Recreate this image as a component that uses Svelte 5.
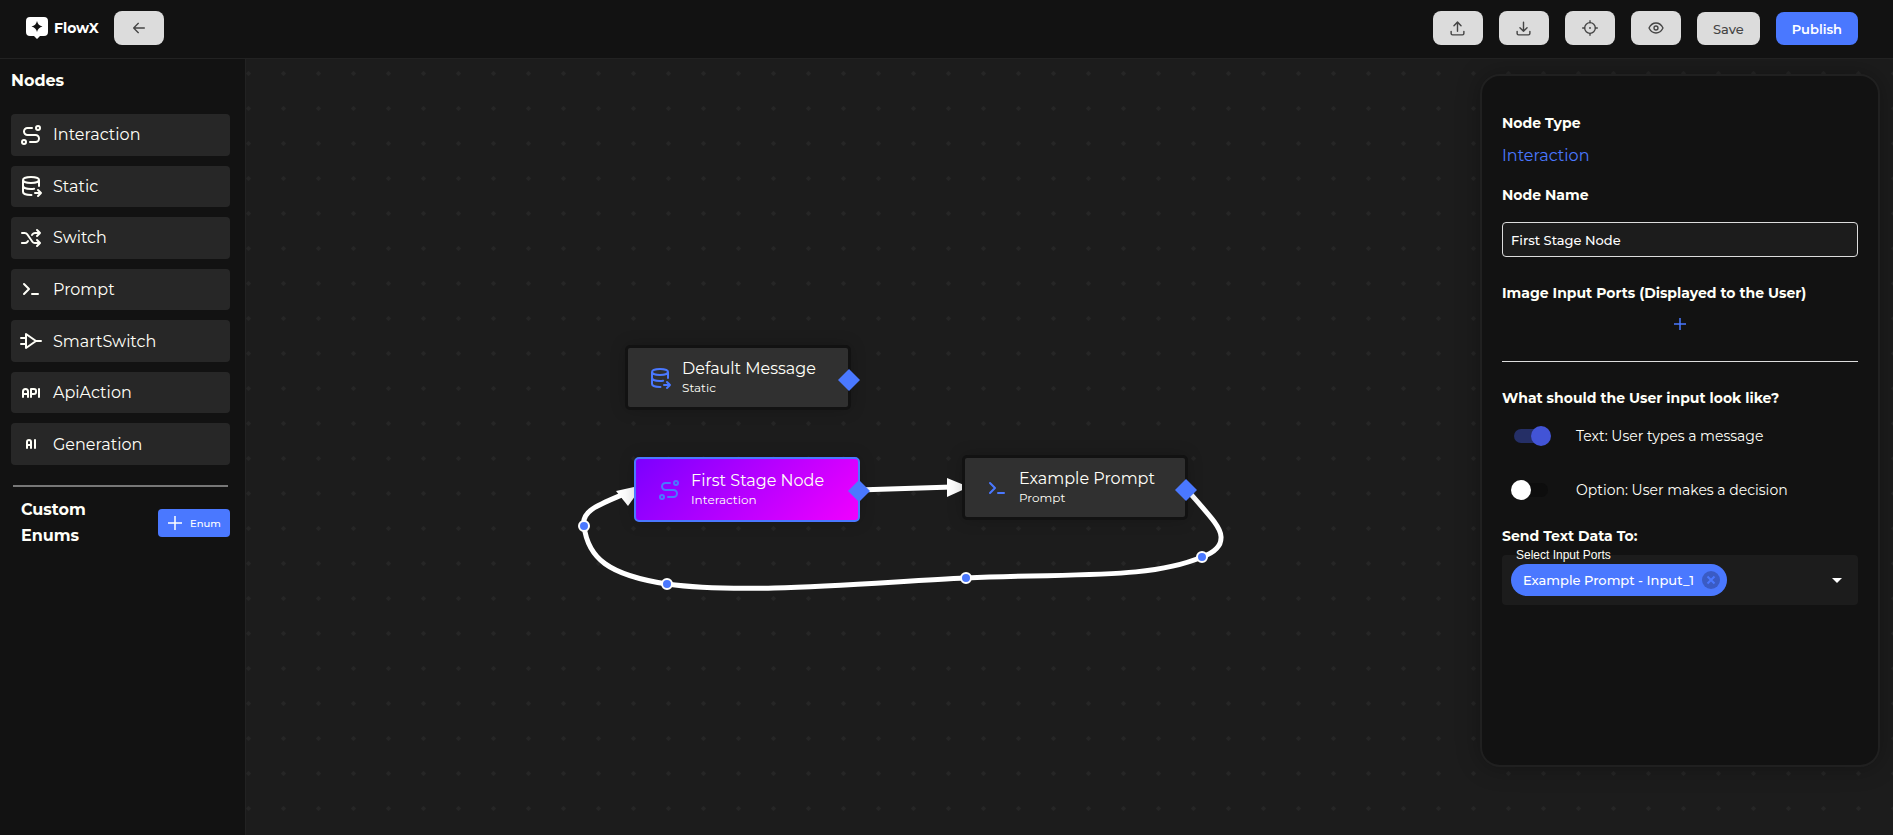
<script>
  const paths = {
    route: 'M3 19a2 2 0 1 0 4 0a2 2 0 0 0 -4 0M19 7a2 2 0 1 0 0 -4a2 2 0 0 0 0 4zM11 19h5.5a3.5 3.5 0 0 0 0 -7h-8a3.5 3.5 0 0 1 0 -7h4.5',
    database: 'M4 6c0 1.657 3.582 3 8 3s8 -1.343 8 -3s-3.582 -3 -8 -3s-8 1.343 -8 3M4 6v6c0 1.657 3.582 3 8 3c1.118 0 2.183 -.086 3.15 -.241M20 12v-6M4 12v6c0 1.657 3.582 3 8 3c.157 0 .312 -.002 .466 -.005M16 19h6M19 16l3 3l-3 3',
    shuffle: 'M18 4l3 3l-3 3M18 20l3 -3l-3 -3M3 7h2.700a3 3 0 0 1 2.500 1.300l5.200 7.400a3 3 0 0 0 2.500 1.300h5M21 7h-5a3 3 0 0 0 -2.500 1.300l-.5 .7M9 15l-.6 .800a3 3 0 0 1 -2.500 1.200h-3',
    prompt: 'M5 7l5 5l-5 5M13 17h6',
    buffer: 'M22 12h-5M2 9h5M2 15h5M7 5l10 7l-10 7z',
    api: 'M4 13h5M12 16v-8h3a2 2 0 0 1 2 2v1a2 2 0 0 1 -2 2h-3M20 8v8M9 16v-5.5a2.5 2.5 0 0 0 -5 0v5.5',
    ai: 'M8 16v-6a2 2 0 1 1 4 0v6M8 13h4M16 8v8',
    upload: 'M3 16v3a2 2 0 0 0 2 2h14a2 2 0 0 0 2 -2v-3M7 8l5 -5l5 5M12 3v13',
    download: 'M3 16v3a2 2 0 0 0 2 2h14a2 2 0 0 0 2 -2v-3M7 11l5 5l5 -5M12 3v13',
    back: 'M4 12h16M11 5l-7 7l7 7'
  };

  const palette = [
    { name: 'Interaction', icon: 'route' },
    { name: 'Static', icon: 'database' },
    { name: 'Switch', icon: 'shuffle' },
    { name: 'Prompt', icon: 'prompt' },
    { name: 'SmartSwitch', icon: 'buffer' },
    { name: 'ApiAction', icon: 'api' },
    { name: 'Generation', icon: 'ai' }
  ];

  const nodes = [
    { title: 'Default Message', type: 'Static', icon: 'database', x: 379, y: 286, active: false },
    { title: 'First Stage Node', type: 'Interaction', icon: 'route', x: 388, y: 398, active: true },
    { title: 'Example Prompt', type: 'Prompt', icon: 'prompt', x: 716, y: 396, active: false }
  ];

  const handles = [
    [338, 467],
    [421, 525],
    [720, 519],
    [956, 498]
  ];

  let nodeName = $state('First Stage Node');
  let textInput = $state(true);
  let optionInput = $state(false);
</script>

{#snippet icon(name, size)}
  <svg class="icon" width={size} height={size} viewBox="0 0 24 24" aria-hidden="true"><path d={paths[name]} /></svg>
{/snippet}

<div class="app">
  <header>
    <div class="brand">
      <svg width="24" height="24" viewBox="0 0 24 24" aria-hidden="true">
        <path fill="#fff" d="M5 1h14a4 4 0 0 1 4 4v11a4 4 0 0 1-4 4h-4l-3 3-3-3H5a4 4 0 0 1-4-4V5a4 4 0 0 1 4-4z" />
        <path fill="#121212" d="M12 5q1 4.500 5.500 5.500q-4.500 1-5.500 5.500q-1-4.500-5.500-5.500q4.500-1 5.500-5.500z" />
      </svg>
      <span>FlowX</span>
    </div>
    <button class="btn" aria-label="Back">{@render icon('back', 16)}</button>
    <div class="actions">
      <button class="btn" aria-label="Upload">{@render icon('upload', 17)}</button>
      <button class="btn" aria-label="Download">{@render icon('download', 17)}</button>
      <button class="btn" aria-label="Center view">
        <svg class="icon" width="16" height="16" viewBox="0 0 24 24" aria-hidden="true">
          <circle cx="12" cy="12" r="8" /><path d="M12 1v3M12 20v3M1 12h3M20 12h3" /><circle cx="12" cy="12" r=".5" />
        </svg>
      </button>
      <button class="btn" aria-label="Preview">
        <svg class="icon" width="16" height="16" viewBox="0 0 24 24" aria-hidden="true">
          <path d="M1.500 12C4 7 7.500 4.500 12 4.500S20 7 22.500 12C20 17 16.500 19.500 12 19.500S4 17 1.500 12z" /><circle cx="12" cy="12" r="3" />
        </svg>
      </button>
      <button class="btn text">Save</button>
      <button class="btn text primary">Publish</button>
    </div>
  </header>

  <div class="body">
    <aside>
      <h2>Nodes</h2>
      <ul>
        {#each palette as item}
          <li>{@render icon(item.icon, 24)}<span>{item.name}</span></li>
        {/each}
      </ul>
      <hr />
      <div class="enums">
        <h2>Custom Enums</h2>
        <button>
          <svg class="icon" width="16" height="16" viewBox="0 0 16 16" aria-hidden="true"><path d="M8 1v14M1 8h14" /></svg>
          Enum
        </button>
      </div>
    </aside>

    <main>
      <svg class="edges" aria-hidden="true">
        <path class="edge" d="M612 431L706 428" />
        <path class="head" d="M701 419L723 428L701 438z" />
        <path
          class="edge"
          d="M942 432C966 459 976 470 975 479C975 488 967 494 956 498C904 520 834 514 720 519C630 523 500 536 421 525C362 516 342 499 338 467C335 452 352 446 378 435"
        />
        <path class="head" d="M370 432L397 426L382 447z" />
        {#each handles as [x, y]}
          <circle cx={x} cy={y} r="5" />
        {/each}
      </svg>

      {#each nodes as node}
        <div class="node" class:active={node.active} style="left: {node.x}px; top: {node.y}px">
          {@render icon(node.icon, 24)}
          <div>
            <div class="title">{node.title}</div>
            <div class="type">{node.type}</div>
          </div>
          <svg class="port" width="22" height="22" viewBox="0 0 22 22" aria-hidden="true"><path d="M11 0L22 11L11 22L0 11z" /></svg>
        </div>
      {/each}

      <section class="panel">
        <h3>Node Type</h3>
        <p class="kind">Interaction</p>
        <label class="heading" for="node-name">Node Name</label>
        <input id="node-name" class="field" type="text" bind:value={nodeName} />
        <h3>Image Input Ports (Displayed to the User)</h3>
        <button class="add" aria-label="Add image input port">
          <svg class="icon" width="14" height="14" viewBox="0 0 14 14" aria-hidden="true"><path d="M7 1v12M1 7h12" /></svg>
        </button>
        <hr />
        <h3>What should the User input look like?</h3>
        <label class="toggle">
          <input type="checkbox" role="switch" bind:checked={textInput} />
          <span>Text: User types a message</span>
        </label>
        <label class="toggle">
          <input type="checkbox" role="switch" bind:checked={optionInput} />
          <span>Option: User makes a decision</span>
        </label>
        <h3 class="send">Send Text Data To:</h3>
        <div class="ports">
          <span class="legend" id="ports-label">Select Input Ports</span>
          <span class="chip">
            Example Prompt - Input_1
            <button aria-label="Remove Example Prompt - Input_1">
              <svg width="18" height="18" viewBox="0 0 18 18" aria-hidden="true">
                <circle cx="9" cy="9" r="9" /><path d="M5.500 5.500l7 7M12.500 5.500l-7 7" />
              </svg>
            </button>
          </span>
          <button class="open" aria-labelledby="ports-label">
            <svg width="24" height="24" viewBox="0 0 24 24" aria-hidden="true"><path d="M7 10l5 5 5-5z" /></svg>
          </button>
        </div>
      </section>
    </main>
  </div>
</div>

<style>
  :global(body) {
    margin: 0;
    background: #1c1c1c;
  }
  .app {
    display: flex;
    flex-direction: column;
    min-height: 100vh;
    color: #fffff8;
    font-family: Montserrat, Inter, sans-serif;
    font-size: 16px;
  }
  .app * {
    box-sizing: border-box;
  }
  button {
    border: 0;
    padding: 0;
    font-family: inherit;
    cursor: pointer;
  }
  h2,
  h3,
  p,
  ul {
    margin: 0;
    padding: 0;
  }
  .icon {
    flex: none;
    fill: none;
    stroke: currentColor;
    stroke-width: 2;
    stroke-linecap: round;
    stroke-linejoin: round;
  }
  header {
    display: flex;
    align-items: flex-start;
    height: 59px;
    padding: 11px 35px 0 25px;
    background: #121212;
    border-bottom: 1px solid #222;
  }
  .brand {
    display: flex;
    align-items: center;
    gap: 5px;
    width: 89px;
    height: 34px;
    font-size: 14px;
    font-weight: 700;
    color: #fff;
  }
  .btn {
    display: flex;
    align-items: center;
    justify-content: center;
    width: 50px;
    height: 34px;
    border-radius: 8px;
    background: #dcdcdc;
    color: #444;
  }
  .btn.text {
    width: auto;
    height: 33px;
    padding: 0 16px;
    font-size: 13px;
    font-weight: 500;
  }
  .btn.primary {
    background: #4a78ff;
    color: #fff;
    font-weight: 600;
  }
  .actions {
    display: flex;
    align-items: flex-end;
    gap: 16px;
    margin-left: auto;
  }
  .body {
    display: flex;
    flex: 1;
  }
  aside {
    flex: none;
    width: 246px;
    padding: 9px 15px 0 11px;
    background: #121212;
    border-right: 1px solid #222;
  }
  h2 {
    font-size: 16px;
    font-weight: 700;
    line-height: 26px;
  }
  ul {
    display: grid;
    grid-auto-rows: 1fr;
    gap: 10px;
    min-height: 351px;
    margin-top: 20px;
    list-style: none;
  }
  li {
    display: flex;
    align-items: center;
    gap: 10px;
    padding: 0 8px;
    border-radius: 4px;
    background: #272727;
  }
  aside hr {
    height: 2px;
    margin: 20px 2px 10px;
    border: 0;
    background: #777;
  }
  .enums {
    display: flex;
    align-items: center;
    justify-content: space-between;
    padding-left: 10px;
  }
  .enums h2 {
    width: 80px;
  }
  .enums button {
    display: flex;
    align-items: center;
    justify-content: center;
    gap: 7px;
    width: 72px;
    height: 28px;
    border-radius: 4px;
    background: #4a78ff;
    color: #fff;
    font-size: 10px;
    font-weight: 500;
  }
  .enums .icon,
  .add .icon {
    stroke-width: 1.5;
    stroke-linecap: butt;
  }
  main {
    position: relative;
    flex: 1;
    display: flex;
    justify-content: flex-end;
    align-items: flex-start;
    padding: 15px 13px 0 0;
    overflow: hidden;
    background-color: #1c1c1c;
    background-image: url("data:image/svg+xml,%3Csvg xmlns='http://www.w3.org/2000/svg' width='35' height='35'%3E%3Cpath d='M2.500 12L5 14.500L2.500 17L0 14.500z' fill='%23262626'/%3E%3C/svg%3E");
  }
  .edges {
    position: absolute;
    inset: 0;
    width: 100%;
    height: 100%;
  }
  .edge {
    fill: none;
    stroke: #fff;
    stroke-width: 5;
  }
  .head {
    fill: #fff;
  }
  circle {
    fill: #4a78ff;
    stroke: #fff;
    stroke-width: 2;
  }
  .icon circle {
    fill: none;
    stroke: currentColor;
  }
  .node {
    position: absolute;
    display: flex;
    align-items: center;
    gap: 10px;
    width: 226px;
    height: 65px;
    padding-left: 20px;
    border: 3px solid #121212;
    border-radius: 5px;
    background: #303030;
    box-shadow: 0 0 16px rgba(0, 0, 0, 0.2);
  }
  .node .icon {
    color: #4a78ff;
  }
  .node.active {
    padding-left: 21px;
    border: 2px solid #4a78ff;
    background: linear-gradient(135deg, #7b00ff, #f000ff);
  }
  .title {
    line-height: 20px;
  }
  .type {
    font-size: 12px;
    line-height: 18px;
  }
  .port {
    position: absolute;
    right: -12px;
    top: 21px;
    fill: #4a78ff;
  }
  .panel {
    position: relative;
    width: 400px;
    min-height: 83vh;
    padding: 34px 20px;
    border: 2px solid #202020;
    border-radius: 20px;
    background: #121212;
    box-shadow: 0 0 24px rgba(0, 0, 0, 0.3);
  }
  h3,
  .heading {
    display: block;
    font-size: 14px;
    font-weight: 700;
    line-height: 26px;
  }
  .kind {
    margin: 7px 0 13px;
    color: #4a78ff;
    line-height: 26px;
  }
  .field {
    display: block;
    width: 100%;
    height: 35px;
    margin: 14px 0 23px;
    padding: 0 8px;
    border: 1px solid #ddd;
    border-radius: 4px;
    background: #1c1c1c;
    color: #fff;
    font-family: inherit;
    font-size: 13px;
    font-weight: 500;
  }
  .add {
    display: flex;
    justify-content: center;
    width: 100%;
    padding: 11px 0;
    background: none;
    color: #4a78ff;
  }
  .panel hr {
    height: 1px;
    margin: 19px 0 23px;
    border: 0;
    background: #ddd;
  }
  .toggle {
    display: flex;
    align-items: center;
    gap: 28px;
    height: 54px;
    padding-left: 9px;
    font-size: 14px;
  }
  h3 + .toggle {
    margin-top: -2px;
  }
  .toggle input {
    position: relative;
    appearance: none;
    width: 37px;
    height: 20px;
    margin: 0;
  }
  .toggle input::before {
    content: "";
    position: absolute;
    inset: 3px 0 3px 3px;
    border-radius: 7px;
    background: #0d0d0d;
  }
  .toggle input::after {
    content: "";
    position: absolute;
    top: 0;
    left: 0;
    width: 20px;
    height: 20px;
    border-radius: 50%;
    background: #fff;
  }
  .toggle input:checked::before {
    background: #252f66;
  }
  .toggle input:checked::after {
    left: 20px;
    background: #4254d6;
  }
  .send {
    margin-top: 6px;
  }
  .ports {
    position: relative;
    display: flex;
    align-items: center;
    justify-content: space-between;
    height: 50px;
    margin-top: 6px;
    padding: 0 9px;
    border-radius: 4px;
    background: #1c1c1c;
  }
  .legend {
    position: absolute;
    left: 14px;
    top: -8px;
    font-family: "Liberation Sans", sans-serif;
    font-size: 12px;
    line-height: 16px;
  }
  .chip {
    display: flex;
    align-items: center;
    gap: 8px;
    height: 32px;
    padding: 0 7px 0 12px;
    border-radius: 16px;
    background: #4a78ff;
    color: #fff;
    font-size: 13px;
    font-weight: 500;
  }
  .chip button {
    display: flex;
    background: none;
  }
  .chip circle {
    fill: #3a5bc4;
    stroke: none;
  }
  .chip path {
    stroke: #4a78ff;
    stroke-width: 2;
  }
  .open {
    display: flex;
    background: none;
    fill: #fff;
  }
</style>
